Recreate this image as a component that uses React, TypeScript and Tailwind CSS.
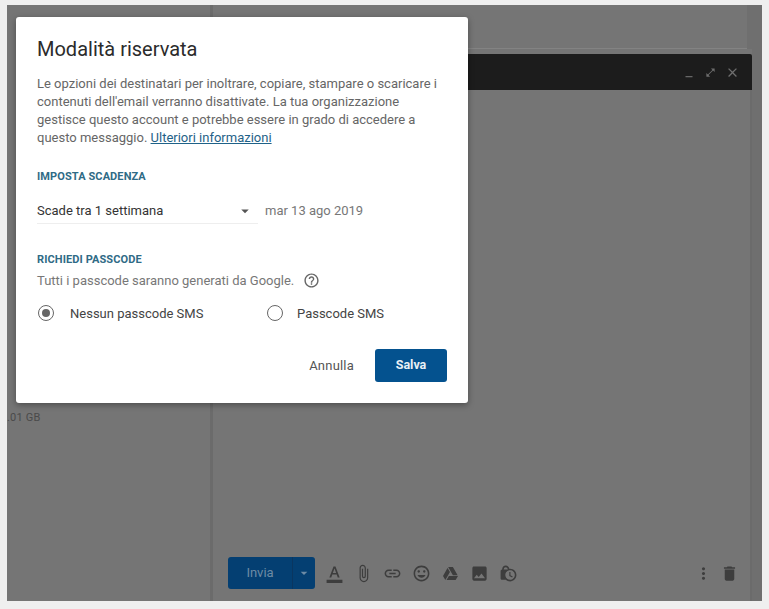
import { FaGoogleDrive } from "react-icons/fa";
import {
  MdArrowDropDown,
  MdAttachFile,
  MdClose,
  MdDelete,
  MdFormatColorText,
  MdHelpOutline,
  MdInsertEmoticon,
  MdLink,
  MdLockClock,
  MdMinimize,
  MdMoreVert,
  MdOpenInFull,
  MdPhoto,
} from "react-icons/md";

function Radio({ checked, label, labelClass }: { checked?: boolean; label: string; labelClass: string }) {
  return (
    <div className="flex items-center">
      <span className="flex h-[16px] w-[16px] items-center justify-center rounded-full border-[1.5px] border-[#666]">
        {checked && <span className="h-[8px] w-[8px] rounded-full bg-[#666]" />}
      </span>
      <span className={labelClass}>{label}</span>
    </div>
  );
}

function Dialog() {
  return (
    <div className="absolute left-[16px] top-[17px] h-[386px] w-[452px] rounded-[3px] bg-white px-[21px] pt-[19px] shadow-[0_2px_6px_rgba(0,0,0,0.35)]">
      <h1 className="text-[20px] leading-[26px] text-[#2b2b2b]">Modalità riservata</h1>

      <p className="mt-[13px] w-[410px] text-[13px] leading-[18px] text-[#666]">
        Le opzioni dei destinatari per inoltrare, copiare, stampare o scaricare i contenuti dell'email verranno
        disattivate. La tua organizzazione gestisce questo account e potrebbe essere in grado di accedere a questo
        messaggio. <span className="text-[#1f6288] underline">Ulteriori informazioni</span>
      </p>

      {/* SCADENZA */}
      <h2 className="mt-[23px] text-[11px] font-bold leading-[14px] tracking-[0.1px] text-[#2f6b86]">
        IMPOSTA SCADENZA
      </h2>
      <div className="mt-[14px] flex items-center">
        <div className="flex h-[26px] w-[221px] items-center justify-between border-b border-[#eee] pr-[4px]">
          <span className="text-[13px] text-[#333]">Scade tra 1 settimana</span>
          <MdArrowDropDown className="text-[18px] text-[#555]" />
        </div>
        <span className="ml-[7px] text-[13px] text-[#777]">mar 13 ago 2019</span>
      </div>

      {/* PASSCODE */}
      <h2 className="mt-[29px] text-[11px] font-bold leading-[14px] tracking-[0.1px] text-[#2f6b86]">
        RICHIEDI PASSCODE
      </h2>
      <div className="mt-[4px] flex items-center gap-[9px]">
        <span className="text-[13px] text-[#777]">Tutti i passcode saranno generati da Google.</span>
        <MdHelpOutline className="text-[17px] text-[#666]" />
      </div>
      <div className="mt-[13px] flex pl-[1px]">
        <div className="w-[229px]">
          <Radio checked label="Nessun passcode SMS" labelClass="ml-[16px] text-[13px] text-[#444]" />
        </div>
        <Radio label="Passcode SMS" labelClass="ml-[14px] text-[13px] text-[#444]" />
      </div>

      <div className="mt-[26px] flex items-center justify-end gap-[21px]">
        <span className="text-[13px] tracking-[0.2px] text-[#555]">Annulla</span>
        <button className="h-[33px] w-[72px] rounded-[3px] bg-[#04528f] text-[12.5px] font-bold text-[#e8f0f5]">
          Salva
        </button>
      </div>
    </div>
  );
}

const toolIcons = [
  <MdFormatColorText key="format" />,
  <MdAttachFile key="attach" />,
  <MdLink key="link" />,
  <MdInsertEmoticon key="emoji" />,
  <FaGoogleDrive key="drive" className="text-[15px]" />,
  <MdPhoto key="photo" />,
  <MdLockClock key="lock" />,
];

export default function App() {
  return (
    <div
      className="relative h-[609px] w-[769px] overflow-hidden bg-[#efefef] pb-[8px] pl-[7px] pr-[7px] pt-[5px]"
      style={{ fontFamily: "Roboto, sans-serif" }}
    >
      {/* DIMMED PAGE */}
      <div className="flex h-full bg-[#757575]">
        <div className="relative w-[206px] shrink-0 border-r-[3px] border-[#6b6b6b]">
          <span className="absolute left-0 top-[405px] text-[11px] tracking-[0.2px] text-[#4a4a4a]">.01 GB</span>
        </div>

        {/* COMPOSE WINDOW */}
        <div className="flex min-w-0 flex-1 flex-col bg-[#6f6f6f]">
          <div className="mr-[15px] h-[44px] border-b border-[#838383] bg-[#757575]" />
          <div className="mr-[10px] flex flex-1 flex-col bg-[#757575] pt-[5px]">
            <div className="flex h-[36px] items-center justify-end rounded-t-[2px] bg-[#1c1c1c] pr-[12px] text-[#6e6e6e]">
              <MdMinimize className="text-[14px]" />
              <MdOpenInFull className="ml-[9px] text-[11px]" />
              <MdClose className="ml-[9px] text-[15px]" />
            </div>
            <div className="flex flex-1 flex-col justify-end border-r-[2px] border-[#6b6b6b]">
              <div className="mb-[12px] flex items-center pl-[15px] pr-[11px] text-[#3d3d3d]">
                <div className="flex h-[32px] w-[87px] rounded-[3px] bg-[#043f72] text-[#6d8ba5]">
                  <span className="flex w-[64px] items-center justify-center text-[13px]">Invia</span>
                  <span className="flex flex-1 items-center justify-center border-l border-[#0a3660]">
                    <MdArrowDropDown className="text-[16px]" />
                  </span>
                </div>
                <div className="ml-[5px] flex items-center text-[19px]">
                  {toolIcons.map((icon) => (
                    <span key={icon.key} className="flex w-[29px] justify-center">
                      {icon}
                    </span>
                  ))}
                </div>
                <div className="ml-auto flex items-center gap-[7px] text-[19px]">
                  <MdMoreVert />
                  <MdDelete />
                </div>
              </div>
            </div>
          </div>
        </div>
      </div>

      <Dialog />
    </div>
  );
}
